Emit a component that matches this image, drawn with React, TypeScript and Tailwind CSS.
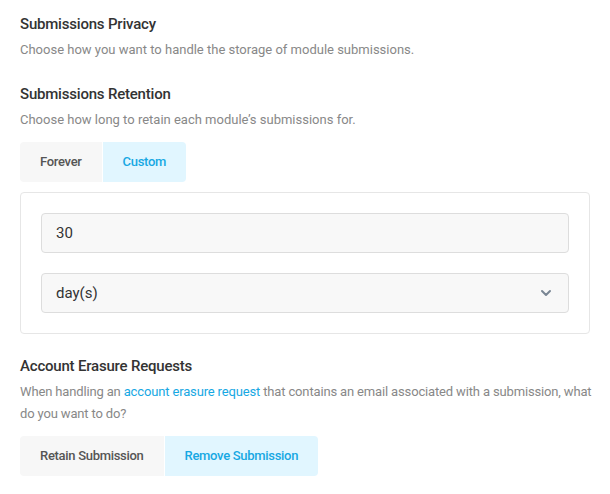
import { ChevronDown } from "lucide-react";

function Toggle({ options, active }: { options: string[]; active: number }) {
  return (
    <div className="flex w-fit gap-px overflow-hidden rounded-[4px]">
      {options.map((o, i) => (
        <button
          key={o}
          className={`h-10 px-5 text-[13px] font-medium tracking-[-0.3px] ${
            i === active ? "bg-[#e1f6ff] text-[#17a8e3]" : "bg-[#f7f7f7] text-[#555]"
          }`}
        >
          {o}
        </button>
      ))}
    </div>
  );
}

export default function App() {
  return (
    <div className="min-h-screen bg-white px-5 pt-[13px] font-['Roboto',sans-serif] text-[#333]">
      <h3 className="text-[15px] font-medium leading-[22px] tracking-[-0.2px]">Submissions Privacy</h3>
      <p className="mt-1 text-[13px] leading-[22px] text-[#888]">
        Choose how you want to handle the storage of module submissions.
      </p>

      <h3 className="mt-[22px] text-[15px] font-medium leading-[22px] tracking-[-0.2px]">
        Submissions Retention
      </h3>
      <p className="mt-1 text-[13px] leading-[22px] text-[#888]">
        Choose how long to retain each module’s submissions for.
      </p>

      <div className="mt-[11px]">
        <Toggle options={["Forever", "Custom"]} active={1} />
      </div>

      <div className="mt-[10px] flex flex-col gap-5 rounded-[4px] border border-[#e6e6e6] p-5">
        <div className="flex h-10 items-center rounded-[4px] border border-[#ddd] bg-[#f8f8f8] px-[14px] text-[15px] text-[#333]">
          30
        </div>
        <div className="flex h-10 items-center justify-between rounded-[4px] border border-[#ddd] bg-[#f8f8f8] px-[14px] text-[15px] text-[#333]">
          <span>day(s)</span>
          <ChevronDown className="size-4 text-[#7a8694]" strokeWidth={3} />
        </div>
      </div>

      <h3 className="mt-[21px] text-[15px] font-medium leading-[22px] tracking-[-0.2px]">
        Account Erasure Requests
      </h3>
      <p className="-mr-2 mt-1 text-[13px] leading-[22px] tracking-[-0.15px] text-[#888]">
        When handling an <a className="text-[#17a8e3]">account erasure request</a> that contains an email
        associated with a submission, what do you want to do?
      </p>

      <div className="mt-[11px]">
        <Toggle options={["Retain Submission", "Remove Submission"]} active={1} />
      </div>
    </div>
  );
}
